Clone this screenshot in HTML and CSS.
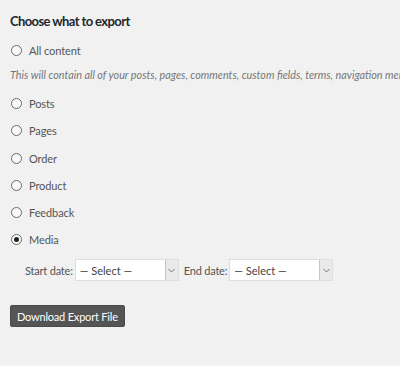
FILE: index.html
```html
<!DOCTYPE html>
<html>
<head>
    <title>Export</title>
    <link rel="stylesheet" href="styles.css">
</head>
<body>
    <div class="export-panel">
        <h2 class="export-title">Choose what to export</h2>

        <label class="option">
            <input type="radio" name="content" class="radio">
            <span>All content</span>
        </label>
        <p class="option-desc">This will contain all of your posts, pages, comments, custom fields, terms, navigation menus, and custom posts.</p>

        <label class="option">
            <input type="radio" name="content" class="radio">
            <span>Posts</span>
        </label>
        <label class="option">
            <input type="radio" name="content" class="radio">
            <span>Pages</span>
        </label>
        <label class="option">
            <input type="radio" name="content" class="radio">
            <span>Order</span>
        </label>
        <label class="option">
            <input type="radio" name="content" class="radio">
            <span>Product</span>
        </label>
        <label class="option">
            <input type="radio" name="content" class="radio">
            <span>Feedback</span>
        </label>
        <label class="option">
            <input type="radio" name="content" class="radio" checked>
            <span>Media</span>
        </label>

        <!-- date range for media -->
        <div class="date-row">
            <span class="date-label">Start date:</span>
            <span class="select-wrap">
                <select class="date-select">
                    <option>&mdash; Select &mdash;</option>
                </select>
                <span class="select-arrow">
                    <svg width="7" height="5" viewBox="0 0 7 5"><path d="M0.5 1 L3.5 4 L6.5 1" fill="none" stroke="#777" stroke-width="1"/></svg>
                </span>
            </span>
            <span class="date-label">End date:</span>
            <span class="select-wrap">
                <select class="date-select">
                    <option>&mdash; Select &mdash;</option>
                </select>
                <span class="select-arrow">
                    <svg width="7" height="5" viewBox="0 0 7 5"><path d="M0.5 1 L3.5 4 L6.5 1" fill="none" stroke="#777" stroke-width="1"/></svg>
                </span>
            </span>
        </div>

        <button class="download-button">Download Export File</button>
    </div>
</body>
</html>
```

FILE: styles.css
```css
body {
    font-family: Lato, "Open Sans", sans-serif;
    margin: 0;
    padding: 0;
    background-color: #f1f1f1;
    color: #444;
    overflow: hidden;
}

.export-panel {
    display: flex;
    flex-direction: column;
    align-items: flex-start;
    padding: 10px 0 0 10px;
}

.export-title {
    font-size: 13px;
    font-weight: 700;
    letter-spacing: -0.6px;
    line-height: 22px;
    color: #23282d;
    margin: 0 0 5px 0;
}

.option {
    display: flex;
    align-items: center;
    height: 27.2px;
    font-size: 11px;
    letter-spacing: -0.1px;
    color: #555;
}

.radio {
    appearance: none;
    -webkit-appearance: none;
    width: 11px;
    height: 11px;
    margin: 0 7px 0 1px;
    border: 1px solid #6a6a6a;
    border-radius: 50%;
    background-color: #fafafa;
    display: flex;
    align-items: center;
    justify-content: center;
}

.radio:checked::before {
    content: "";
    width: 5px;
    height: 5px;
    border-radius: 50%;
    background-color: #222;
}

.option-desc {
    width: 390px;
    overflow: hidden;
    font-size: 10.8px;
    font-style: italic;
    line-height: 22px;
    color: #777;
    margin: 0 0 4px 0;
    white-space: nowrap;
}

.date-row {
    display: flex;
    align-items: center;
    margin: 6px 0 0 15px;
    font-size: 11px;
    letter-spacing: -0.2px;
    color: #555;
}

.date-label {
    margin-right: 2px;
}

.select-wrap {
    display: flex;
    width: 104px;
    height: 22px;
    border: 1px solid #ddd;
    background-color: #fff;
    box-sizing: border-box;
    margin-right: 5px;
}

.date-select {
    appearance: none;
    -webkit-appearance: none;
    flex: 1;
    min-width: 0;
    border: none;
    background: transparent;
    font-family: inherit;
    font-size: 11px;
    color: #444;
    padding: 0 0 0 4px;
    outline: none;
}

.select-arrow {
    width: 12px;
    background-color: #e9e9e9;
    border-left: 1px solid #c6c6c6;
    display: flex;
    align-items: center;
    justify-content: center;
}

.download-button {
    margin-top: 24px;
    height: 22px;
    padding: 0 6px;
    background-color: #555;
    color: #fff;
    border: 1px solid #4a4a4a;
    border-radius: 2px;
    font-family: inherit;
    font-size: 11px;
    letter-spacing: -0.2px;
    cursor: pointer;
}
```
